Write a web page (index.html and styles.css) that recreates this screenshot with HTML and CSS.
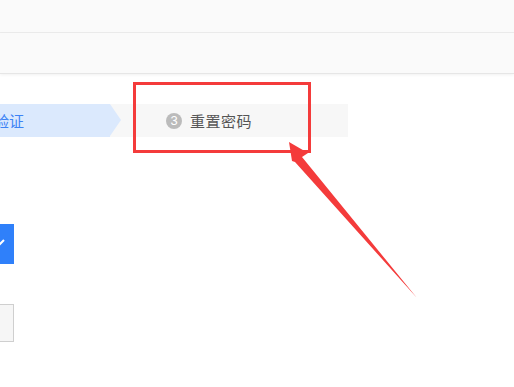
FILE: index.html
```html
<!DOCTYPE html>
<html>
	<head>
		<meta charset="UTF-8">
		<title>重置密码</title>
		<link rel="stylesheet" href="styles.css">
	</head>
	<body>
		<div class="topbar"></div>
		<div class="subbar"></div>

		<div class="main">
			<div class="steps">
				<div class="step done">验证</div>
				<div class="step current">
					<span class="num">3</span>
					<span class="label">重置密码</span>
				</div>
			</div>

			<div class="btn-ok">
				<svg width="12" height="12" viewBox="0 0 12 12">
					<polyline points="-6,6 -2,9 4,3" fill="none" stroke="#fff" stroke-width="2"/>
				</svg>
			</div>

			<div class="input-box"></div>
		</div>

		<!-- annotation on the screenshot -->
		<div class="mark"></div>
		<svg class="pointer" width="514" height="387" viewBox="0 0 514 387">
			<polygon points="289,142 308,153 302,157 417,298 295,162 292,161" fill="#f43b3b"/>
		</svg>
	</body>
</html>
```

FILE: styles.css
```css
body{
	margin:0;
	background:#fff;
	font-family:"Microsoft YaHei","Noto Sans CJK SC",sans-serif;
	overflow:hidden;
}
.topbar{
	height:32px;
	background:#fafafa;
	border-bottom:1px solid #ececec;
}
.subbar{
	height:40px;
	background:#fafafa;
	border-bottom:1px solid #e6e6e6;
	box-shadow:0 1px 3px rgba(0,0,0,0.06);
}
.main{
	padding-top:30px;
}
.steps{
	display:flex;
	height:33px;
	margin-left:-6px;
}
.step{
	display:flex;
	align-items:center;
}
.done{
	width:116px;
	background:#dbe9fd;
	color:#3d83f5;
	font-size:15px;
	position:relative;
	z-index:1;
}
.done:after{
	content:"";
	position:absolute;
	top:0;
	right:-11px;
	border-left:11px solid #dbe9fd;
	border-top:16.5px solid transparent;
	border-bottom:16.5px solid transparent;
}
.current{
	width:182px;
	padding-left:56px;
	background:#f7f7f7;
	color:#555;
}
.num{
	width:16px;
	height:16px;
	line-height:16px;
	border-radius:50%;
	background:#bbb;
	color:#fff;
	font-size:13px;
	text-align:center;
	font-family:"Liberation Sans",sans-serif;
	margin-right:8px;
}
.label{
	font-size:15px;
	letter-spacing:0.5px;
}
.btn-ok{
	width:14px;
	height:40px;
	margin-top:87px;
	background:#2f80fa;
	display:flex;
	align-items:center;
}
.btn-ok svg{
	margin-top:-2px;
}
.input-box{
	width:13px;
	height:36px;
	margin-top:40px;
	background:#f6f6f6;
	border:1px solid #cfcfcf;
	border-left:none;
}
.mark{
	position:absolute;
	left:133px;
	top:82px;
	width:172px;
	height:65px;
	border:3px solid #f43b3b;
}
.pointer{
	position:absolute;
	left:0;
	top:0;
}
```
